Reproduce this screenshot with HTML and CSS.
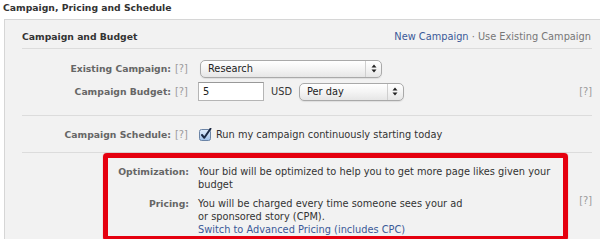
FILE: index.html
```html
<!DOCTYPE html>
<html>
<head>
<meta charset="utf-8">
<link rel="stylesheet" href="styles.css">
</head>
<body>
<div class="page-title">Campaign, Pricing and Schedule</div>
<div class="panel">
  <div class="panel-head">
    <span class="panel-title">Campaign and Budget</span>
    <span class="head-links"><a class="link">New Campaign</a> · Use Existing Campaign</span>
  </div>

  <div class="section section-budget">
    <div class="row">
      <div class="label">Existing Campaign:</div>
      <span class="help">[?]</span>
      <div class="field">
        <div class="select select-wide"><span class="select-text">Research</span><span class="select-arrow"><svg width="6" height="9" viewBox="0 0 6 9"><path d="M0.5 3.5 L3 0.5 L5.5 3.5 Z M0.5 5.5 L3 8.5 L5.5 5.5 Z" fill="#222"/></svg></span></div>
      </div>
    </div>
    <div class="row">
      <div class="label">Campaign Budget:</div>
      <span class="help">[?]</span>
      <div class="field">
        <div class="input">5</div>
        <span class="unit">USD</span>
        <div class="select select-narrow"><span class="select-text">Per day</span><span class="select-arrow"><svg width="6" height="9" viewBox="0 0 6 9"><path d="M0.5 3.5 L3 0.5 L5.5 3.5 Z M0.5 5.5 L3 8.5 L5.5 5.5 Z" fill="#222"/></svg></span></div>
      </div>
      <span class="help help-right">[?]</span>
    </div>
  </div>

  <div class="section section-schedule">
    <div class="row row-check">
      <div class="label">Campaign Schedule:</div>
      <span class="help">[?]</span>
      <div class="field field-check">
        <svg class="checkbox" width="13" height="13" viewBox="0 0 13 13">
          <defs>
            <linearGradient id="cb" x1="0" y1="0" x2="0" y2="1">
              <stop offset="0" stop-color="#e3eefb"/>
              <stop offset="1" stop-color="#9fc1ea"/>
            </linearGradient>
          </defs>
          <rect x="0.5" y="1.5" width="11" height="11" rx="2" fill="url(#cb)" stroke="#6b84a6"/>
          <path d="M3 7 L5.3 9.8 L11.5 0.8" fill="none" stroke="#1c2a44" stroke-width="2" stroke-linecap="round" stroke-linejoin="round"/>
        </svg>
        <span class="check-text">Run my campaign continuously starting today</span>
      </div>
    </div>
  </div>

  <div class="section section-pricing">
    <div class="pricing-rows">
      <div class="prow">
        <div class="plabel">Optimization:</div>
        <div class="ptext">Your bid will be optimized to help you to get more page likes given your<br>budget</div>
      </div>
      <div class="prow">
        <div class="plabel">Pricing:</div>
        <div class="ptext">You will be charged every time someone sees your ad<br>or sponsored story (CPM).<br><a class="link">Switch to Advanced Pricing (includes CPC)</a></div>
      </div>
    </div>
    <span class="help help-right">[?]</span>
    <div class="highlight"></div>
  </div>
</div>
</body>
</html>
```

FILE: styles.css
```css
html, body {
  margin: 0;
  padding: 0;
  background: #fff;
}

body {
  font-family: "DejaVu Sans", "Liberation Sans", sans-serif;
  font-size: 9.8px;
  line-height: 13px;
  color: #333;
  height: 239px;
  overflow: hidden;
}

.page-title {
  height: 19px;
  line-height: 16px;
  padding-left: 3px;
  font-weight: bold;
  font-size: 9.25px;
  color: #333;
}

.panel {
  margin-left: 4px;
  background: #f2f2f2;
  border-top: 1px solid #d6d6d6;
  border-left: 1px solid #d6d6d6;
  padding: 0 8px 0 17px;
  height: 219px;
  overflow: hidden;
}

.panel-head {
  display: flex;
  align-items: center;
  justify-content: space-between;
  height: 23px;
  padding-top: 5px;
  border-bottom: 1px solid #dcdcdc;
}

.panel-title {
  font-weight: bold;
  font-size: 9.25px;
  color: #333;
}

.head-links {
  color: #777;
  padding-right: 1px;
}

.link {
  color: #3b5998;
  text-decoration: none;
}

.section {
  border-bottom: 1px solid #dcdcdc;
}

.section-budget {
  display: flex;
  flex-direction: column;
  gap: 4px;
  padding: 10px 0 14px;
}

.section-schedule {
  padding: 10px 0;
}

.row {
  display: flex;
  align-items: center;
  height: 19px;
}

.row-check {
  height: 16px;
}

.label {
  width: 149px;
  text-align: right;
  font-weight: bold;
  font-size: 9.25px;
  color: #666;
  white-space: nowrap;
}

.help {
  margin-left: 4px;
  width: 13px;
  color: #9a9a9a;
  white-space: nowrap;
}

.help-right {
  margin-left: auto;
  width: auto;
}

.field {
  display: flex;
  align-items: center;
  margin-left: 10px;
}

.select {
  display: flex;
  align-items: center;
  justify-content: space-between;
  box-sizing: border-box;
  height: 18px;
  border: 1px solid #a9a9a9;
  border-radius: 5px;
  background: linear-gradient(#ffffff, #f4f4f4 50%, #e6e6e6);
  box-shadow: 0 1px 1px rgba(0, 0, 0, 0.08);
  color: #222;
}

.select-wide {
  width: 182px;
  margin-left: 2px;
}

.select-narrow {
  width: 105px;
}

.select-text {
  padding-left: 7px;
}

.select-arrow {
  display: flex;
  align-items: center;
  justify-content: center;
  width: 15px;
  height: 100%;
  border-left: 1px solid #cfcfcf;
}

.input {
  box-sizing: border-box;
  width: 66px;
  height: 19px;
  padding-left: 4px;
  line-height: 17px;
  background: #fff;
  border: 1px solid #b5b5b5;
  border-top-color: #999;
  color: #222;
}

.unit {
  margin: 0 7px;
  color: #333;
}

.field-check {
  margin-left: 11px;
}

.checkbox {
  display: block;
  margin-right: 4px;
}

.section-pricing {
  position: relative;
  display: flex;
  align-items: center;
  padding-top: 12px;
  border-bottom: none;
}

.pricing-rows {
  display: flex;
  flex-direction: column;
  gap: 6px;
}

.prow {
  display: flex;
}

.plabel {
  width: 167px;
  text-align: right;
  font-weight: bold;
  font-size: 9.25px;
  color: #666;
}

.ptext {
  margin-left: 9px;
  white-space: nowrap;
  color: #333;
}

.highlight {
  position: absolute;
  left: 81px;
  top: 0;
  width: 455px;
  height: 78px;
  border: 5px solid #e5000f;
  border-radius: 4px;
  box-shadow: 0 0 1px rgba(200, 0, 0, 0.6);
}
```
